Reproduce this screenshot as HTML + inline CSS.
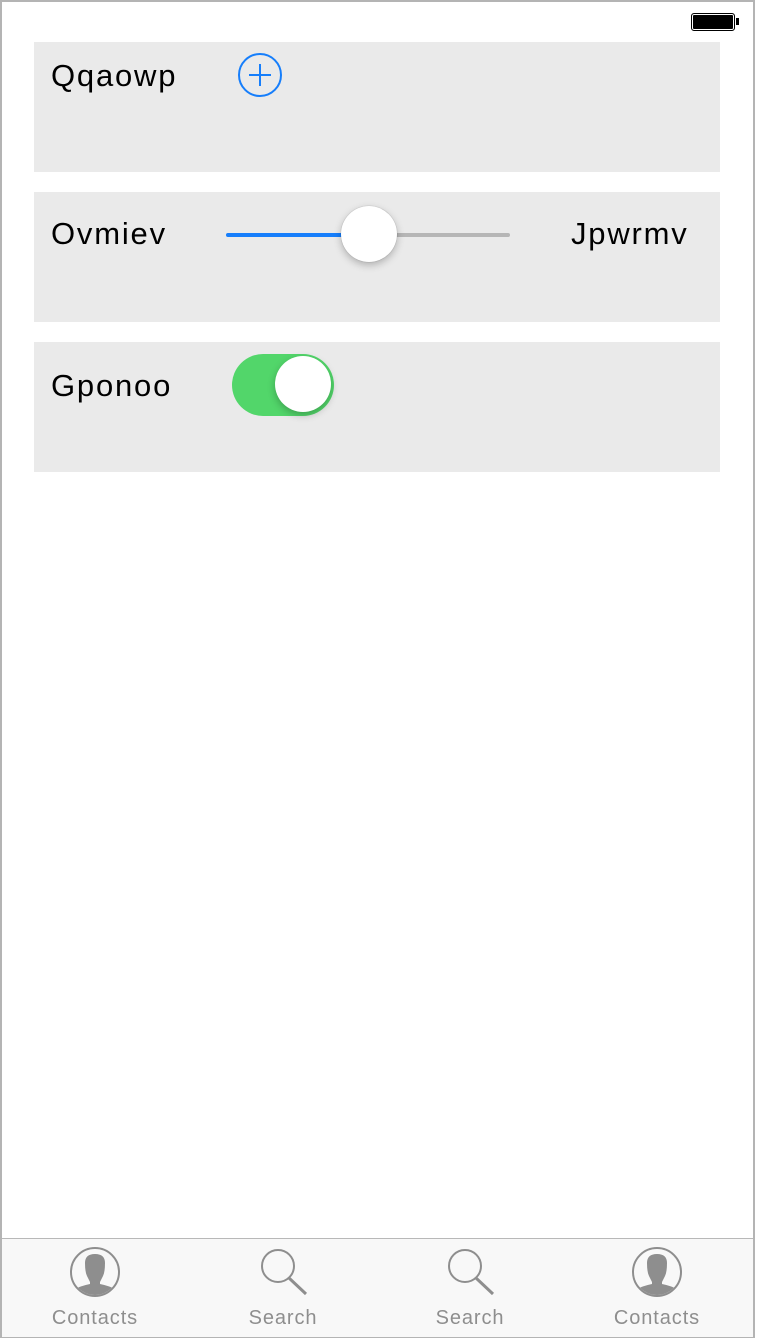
<!DOCTYPE html>
<html><head><style>
body{margin:0;width:760px;height:1340px;background:#fff;position:relative;font-family:"Liberation Sans",sans-serif;overflow:hidden}
.frame{position:absolute;left:0;top:0;width:751px;height:1334px;border:2px solid #b4b4b4}
.row{position:absolute;left:34px;width:686px;height:130px;background:#eaeaea}
.lbl{position:absolute;font-size:31px;letter-spacing:1.8px;color:#000}
.tab{position:absolute;top:1238px;left:2px;width:751px;height:98px;background:#f8f8f8;border-top:1px solid #b8b8b8}
.t{position:absolute;top:1307px;font-size:20px;letter-spacing:0.9px;color:#8e8e8e;width:160px;text-align:center}
</style></head><body>
<div class="frame"></div>
<div style="position:absolute;left:691px;top:13px;width:42px;height:16px;border:1px solid #000;border-radius:3px;background:#000;box-shadow:inset 0 0 0 1px #fff"></div>
<div style="position:absolute;left:736px;top:18px;width:3px;height:7px;background:#000"></div>

<div class="row" style="top:42px"><span class="lbl" style="left:17px;top:16px">Qqaowp</span>
<svg style="position:absolute;left:203px;top:10px" width="46" height="46"><circle cx="23" cy="23" r="21" fill="none" stroke="#167efb" stroke-width="2"/><path d="M23 12V34M12 23H34" stroke="#167efb" stroke-width="2"/></svg></div>

<div class="row" style="top:192px"><span class="lbl" style="left:17px;top:24px">Ovmiev</span>
<span class="lbl" style="left:537px;top:24px">Jpwrmv</span>
<div style="position:absolute;left:192px;top:41px;width:140px;height:4px;background:#167efb;border-radius:2px"></div>
<div style="position:absolute;left:332px;top:41px;width:144px;height:4px;background:#b6b6b6;border-radius:2px"></div>
<div style="position:absolute;left:307px;top:14px;width:56px;height:56px;border-radius:50%;background:#fff;box-shadow:0 3px 8px rgba(0,0,0,.25),0 0 1px rgba(0,0,0,.3)"></div></div>

<div class="row" style="top:342px"><span class="lbl" style="left:17px;top:26px">Gponoo</span>
<div style="position:absolute;left:198px;top:12px;width:102px;height:62px;border-radius:31px;background:#52d66a"></div>
<div style="position:absolute;left:241px;top:14px;width:56px;height:56px;border-radius:50%;background:#fff;box-shadow:0 3px 8px rgba(0,0,0,.25)"></div></div>

<div class="tab"></div>
<svg style="position:absolute;left:0;top:1245px" width="760" height="60">
<defs><clipPath id="cc"><circle cx="0" cy="27" r="23"/></clipPath>
<g id="person"><circle cx="0" cy="27" r="24" fill="none" stroke="#8e8e8e" stroke-width="2"/>
<path clip-path="url(#cc)" d="M-10 18Q-10 9 0 9Q10 9 10 18Q10 27 8 31Q6 35 5 37L5 39Q15 41 22 45L22 60L-22 60L-22 45Q-15 41-5 39L-5 37Q-6 35-8 31Q-10 27-10 18Z" fill="#8e8e8e"/></g>
<g id="search" fill="none" stroke="#8e8e8e"><circle cx="-5" cy="21" r="16" stroke-width="2"/><path d="M6 33L23 49" stroke-width="3"/></g></defs>
<use href="#person" x="95"/><use href="#person" x="657"/>
<use href="#search" x="283"/><use href="#search" x="470"/>
</svg>
<div class="t" style="left:15px">Contacts</div>
<div class="t" style="left:203px">Search</div>
<div class="t" style="left:390px">Search</div>
<div class="t" style="left:577px">Contacts</div>
</body></html>
